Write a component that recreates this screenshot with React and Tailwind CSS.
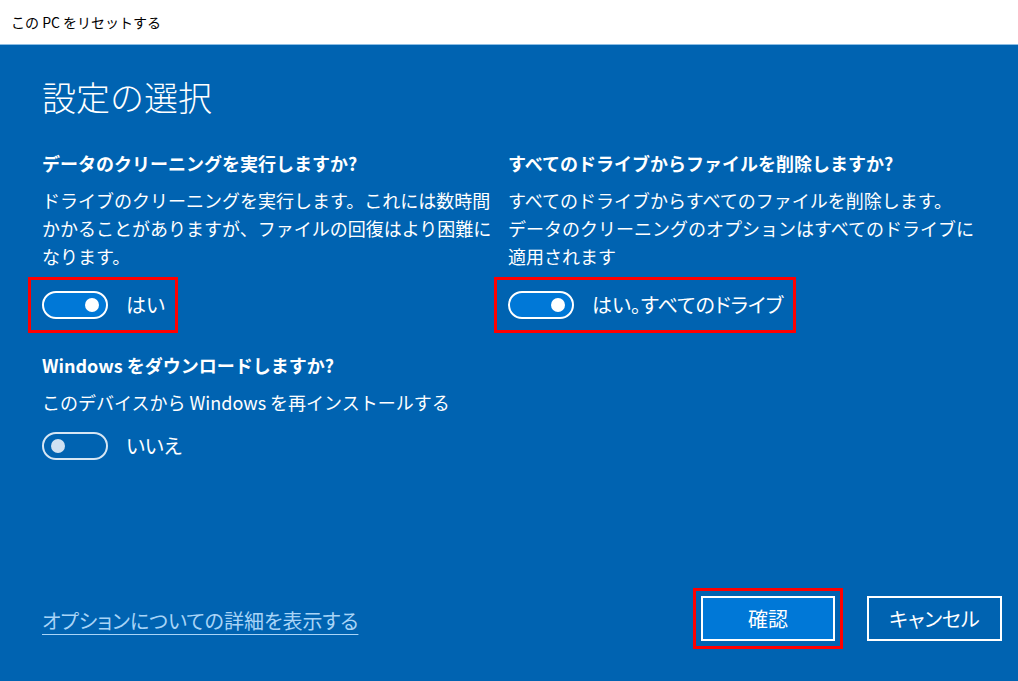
import React, { useState } from 'react';

const font = { fontFamily: '"Noto Sans CJK JP", "Noto Sans", sans-serif' };

const Toggle = ({ on, onToggle }) => (
  <button
    type="button"
    onClick={onToggle}
    className={`relative w-[66px] h-[28px] rounded-full border-2 shrink-0 ${
      on ? 'bg-[#0078d7] border-white' : 'bg-transparent border-[#d6e6f4]'
    }`}
  >
    <span
      className={`absolute top-1/2 -translate-y-1/2 w-[14px] h-[14px] rounded-full ${
        on ? 'right-[7px] bg-white' : 'left-[7px] bg-[#cfe1f2]'
      }`}
    />
  </button>
);

const ToggleRow = ({ on, onToggle, label, marked, className = '' }) => (
  <div
    className={`flex items-center gap-[18px] h-[56px] -ml-[14px] pl-[11px] pr-[10px] w-fit border-[3px] ${
      marked ? 'border-[#ff0000]' : 'border-transparent'
    } ${className}`}
  >
    <Toggle on={on} onToggle={onToggle} />
    <span className="text-[20px] leading-none text-white whitespace-nowrap [font-feature-settings:'palt']">
      {label}
    </span>
  </div>
);

const Section = ({ title, lines }) => (
  <div>
    <div className="text-[18px] leading-[28px] font-bold text-white whitespace-nowrap">{title}</div>
    <div className="mt-[9px] text-[18px] leading-[28px] text-white whitespace-nowrap">
      {lines.map((l, i) => (
        <div key={i}>{l}</div>
      ))}
    </div>
  </div>
);

export default function App() {
  const [clean, setClean] = useState(true);
  const [allDrives, setAllDrives] = useState(true);
  const [download, setDownload] = useState(false);

  return (
    <div className="w-[1018px] h-[681px] flex flex-col overflow-hidden" style={font}>
      {/* タイトルバー */}
      <div className="h-[45px] shrink-0 bg-white border-b border-[#8cbde4] flex items-center px-[11px]">
        <span className="text-[14px] text-black">この PC をリセットする</span>
      </div>

      <div className="flex-1 bg-[#0063b1] flex flex-col pl-[42px] pr-[16px] pt-[30px] pb-[32px]">
        <h1 className="text-[34px] leading-[44px] font-light text-white">設定の選択</h1>

        <div className="mt-[30px] grid grid-cols-[466px_1fr]">
          <div>
            <Section
              title="データのクリーニングを実行しますか?"
              lines={[
                'ドライブのクリーニングを実行します。これには数時間',
                'かかることがありますが、ファイルの回復はより困難に',
                'なります。',
              ]}
            />
            <ToggleRow on={clean} onToggle={() => setClean(!clean)} label="はい" marked className="mt-[7px]" />

            <div className="mt-[18px]">
              <Section
                title="Windows をダウンロードしますか?"
                lines={['このデバイスから Windows を再インストールする']}
              />
            </div>
            <ToggleRow
              on={download}
              onToggle={() => setDownload(!download)}
              label={download ? 'はい' : 'いいえ'}
              className="mt-[2px]"
            />
          </div>

          <div>
            <Section
              title="すべてのドライブからファイルを削除しますか?"
              lines={[
                'すべてのドライブからすべてのファイルを削除します。',
                'データのクリーニングのオプションはすべてのドライブに',
                '適用されます',
              ]}
            />
            <ToggleRow
              on={allDrives}
              onToggle={() => setAllDrives(!allDrives)}
              label="はい。すべてのドライブ"
              marked
              className="mt-[7px]"
            />
          </div>
        </div>

        <div className="flex-1" />

        <div className="flex items-center">
          <a
            href="#"
            className="text-[20px] text-[#a8d4f7] underline underline-offset-[5px] decoration-1 mt-[4px] [font-feature-settings:'palt']"
          >
            オプションについての詳細を表示する
          </a>
          <div className="flex-1" />
          <div className="border-[3px] border-[#ff0000] p-[5px]">
            <button className="w-[134px] h-[45px] border-2 border-white bg-[#0078d7] text-white text-[20px]">
              確認
            </button>
          </div>
          <button className="ml-[24px] w-[135px] h-[45px] border-2 border-white bg-transparent text-white text-[20px] [font-feature-settings:'palt']">
            キャンセル
          </button>
        </div>
      </div>
    </div>
  );
}
